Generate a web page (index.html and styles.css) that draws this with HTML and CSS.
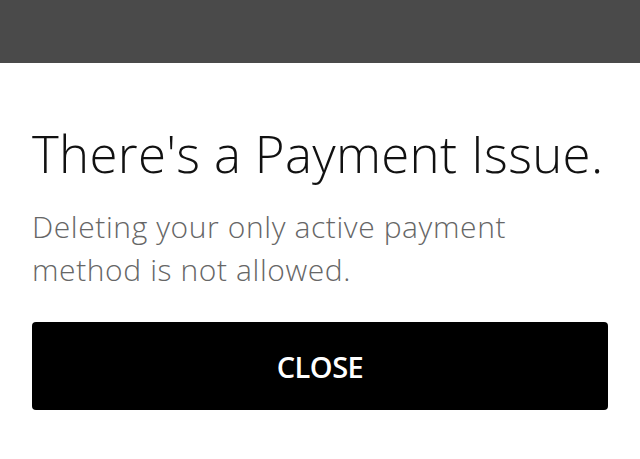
FILE: index.html
```html
<!DOCTYPE html>
<html lang="en">

<head>
    <meta charset="UTF-8">
    <meta name="viewport" content="width=device-width, initial-scale=1.0">
    <title>Payment Issue</title>
    <link rel="stylesheet" href="styles.css">
</head>

<body>
    <div class="status-bar"></div>
    <div class="dialog">
        <h1 class="dialog-title">There's a Payment Issue.</h1>
        <p class="dialog-text">Deleting your only active payment method is not allowed.</p>
        <button class="close-btn">CLOSE</button>
    </div>
</body>

</html>
```

FILE: styles.css
```css
body {
    margin: 0;
    background-color: white;
    font-family: "Open Sans", sans-serif;
}

.status-bar {
    height: 63px;
    background-color: #4a4a4a;
}

.dialog {
    padding: 58px 32px 0 32px;
}

.dialog-title {
    margin: 0;
    font-size: 51px;
    font-weight: 300;
    line-height: 64px;
    letter-spacing: 0.3px;
    white-space: nowrap;
    color: #111;
}

.dialog-text {
    margin: 20px 0 0 0;
    max-width: 520px;
    font-size: 30px;
    font-weight: 300;
    line-height: 43px;
    letter-spacing: 0.6px;
    color: #666;
}

.close-btn {
    display: block;
    width: 100%;
    height: 88px;
    margin-top: 31px;
    background-color: black;
    color: white;
    border: none;
    border-radius: 4px;
    font-family: "Open Sans", sans-serif;
    font-size: 29px;
    font-weight: 600;
    letter-spacing: -0.5px;
}
```
